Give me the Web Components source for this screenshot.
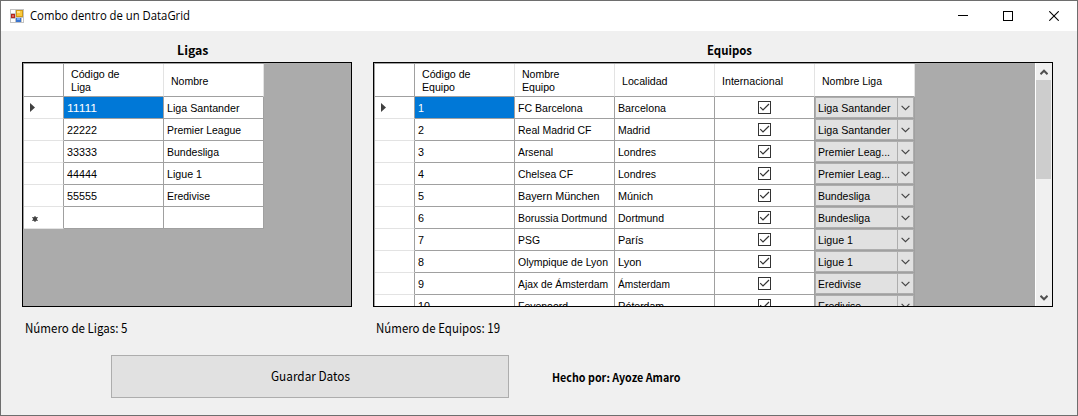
<!DOCTYPE html>
<html lang="es">
<head>
<meta charset="utf-8">
<title>Combo dentro de un DataGrid</title>
<style>
html,body{margin:0;height:100%;overflow:hidden}
body{font-family:"Noto Sans CJK SC",sans-serif;color:#000}
</style>
</head>
<body>
<app-window></app-window>
<script>
const define = (name, html, setup) => customElements.define(name, class extends HTMLElement {
  connectedCallback() {
    if (this.shadowRoot) return;
    const t = document.createElement('template');
    t.innerHTML = typeof html === 'function' ? html(this) : html;
    this.attachShadow({mode: 'open'}).append(t.content.cloneNode(true));
    if (setup) setup(this);
  }
});

/* Single-line text condensed or widened to "w" pixels. */
define('fit-text', `<style>:host{display:block;white-space:pre}span{display:inline-block;transform-origin:0 50%}</style><span><slot></slot></span>`, el => {
  const w = +el.getAttribute('w'), s = el.shadowRoot.querySelector('span');
  const natural = s.getBoundingClientRect().width;
  if (w && natural) {
    s.style.transform = `scaleX(${(w / natural).toFixed(4)})`;
    el.style.width = w + 'px';
  }
});

const WIDTHS = {'Código de':48.5,'Liga':20,'Nombre':37.5,'Equipo':33,'Localidad':45.5,'Internacional':61,'Nombre Liga':60,
 'Liga Santander':72.5,'Premier League':74,'Premier Leag...':72,'Bundesliga':52,'Ligue 1':35,'Eredivise':43,
 'FC Barcelona':64.5,'Real Madrid CF':73.5,'Arsenal':35,'Chelsea CF':55,'Bayern München':81.5,'Borussia Dortmund':89,'PSG':22,
 'Olympique de Lyon':90,'Ajax de Ámsterdam':90,'Feyenoord':50,'Barcelona':48,'Madrid':32,'Londres':38,'Múnich':35,
 'Dortmund':46,'París':25.5,'Lyon':23.5,'Ámsterdam':52,'Róterdam':46};
const fit = s => `<fit-text w="${WIDTHS[s] || s.length * 6}">${s}</fit-text>`;

define('title-bar', el => `<style>
:host{display:flex;align-items:center;height:30px;background:#fff;font:12px "Open Sans",sans-serif;flex:none}
.icon{margin-left:9px;margin-right:6px}
fit-text{line-height:30px;margin-right:auto}
.b{width:46px;display:flex;justify-content:center}
.min{width:44px}
svg{display:block}
</style>
<svg class="icon" width="14" height="14" shape-rendering="crispEdges"><rect width="14" height="14" fill="#c3c3c3"/><path d="M1 1h4v3H1zM1 10h4v3H1zM13 9V13H12V9z" fill="#fff"/><rect x="1" y="5" width="4" height="4" fill="#b3261e"/><rect x="2" y="6" width="2" height="2" fill="#e0635a"/><rect x="6" y="1" width="7" height="7" fill="#d09a16"/><rect x="7" y="2" width="5" height="5" fill="#fac93c"/><rect x="7" y="2" width="3" height="2" fill="#ffe38b"/><rect x="6" y="9" width="5" height="4" fill="#3a75d0"/><rect x="7" y="9" width="3" height="2" fill="#79aaf5"/></svg>
<fit-text w="160">${el.getAttribute('text')}</fit-text>
<span class="b min"><svg width="10" height="10" shape-rendering="crispEdges"><path d="M0 4h10v1H0z"/></svg></span>
<span class="b"><svg width="10" height="10" shape-rendering="crispEdges"><path d="M.5.5h9v9h-9z" fill="none" stroke="#000"/></svg></span>
<span class="b"><svg width="10" height="10"><path d="M.3.3l9.4 9.4M9.7.3L.3 9.7" stroke="#000" stroke-width="1.1"/></svg></span>`);

define('check-box', `<style>:host{display:block;width:13px;height:13px}svg{display:block}</style>
<svg width="13" height="13"><rect x=".5" y=".5" width="12" height="12" fill="#fff" stroke="#333"/><path d="M2.2 6.2L5 9L11 3" fill="none" stroke="#333" stroke-width="1.2"/></svg>`);

define('combo-cell', `<style>
:host{display:flex;box-sizing:border-box;width:99px;height:21px;border:1px solid #adadad;background:#e1e1e1}
.t{flex:1;padding-left:2px;line-height:20px;overflow:hidden}
.a{width:15px;border-left:1px solid #adadad;display:flex;align-items:center;justify-content:center}
</style><span class="t"><slot></slot></span><span class="a"><svg width="9" height="6"><path d="M.6 .8L4.5 4.7L8.4 .8" fill="none" stroke="#444" stroke-width="1.15"/></svg></span>`);

define('scroll-bar', `<style>
:host{display:flex;flex-direction:column;box-sizing:border-box;width:17px;background:#f0f0f0;border-left:1px solid #fff}
.btn{height:17px;display:flex;align-items:center;justify-content:center;flex:none;padding-right:1px}
.thumb{height:99px;width:15px;background:#cdcdcd}.track{flex:1}
</style>
<span class="btn"><svg width="8" height="6"><path d="M.5 5.2L4 1.7L7.5 5.2" fill="none" stroke="#505050" stroke-width="2"/></svg></span>
<div class="track"><div class="thumb"></div></div>
<span class="btn"><svg width="8" height="6"><path d="M.5 .8L4 4.3L7.5 .8" fill="none" stroke="#505050" stroke-width="2"/></svg></span>`);

const cell = v => v === true ? '<div class="c k"><check-box></check-box></div>'
  : v.startsWith('>') ? `<div class="c m"><combo-cell>${fit(v.slice(1))}</combo-cell></div>`
  : `<div class="c">${v ? fit(v) : ''}</div>`;
const marks = {
  arrow: '<svg width="5" height="9"><path d="M0 0L5 4.5L0 9z" fill="#404040"/></svg>',
  star: '<svg class="star" width="6" height="6"><circle cx="3" cy="3" r="2.3" fill="#505050"/><path d="M3 0v6M.3 1.4l5.4 3.2M5.7 1.4L.3 4.6" stroke="#404040" stroke-width="1"/></svg>'
};
const DATA = {
  ligas: {cols: ['Código de|Liga', 'Nombre'], rows: [['11111','Liga Santander'],['22222','Premier League'],['33333','Bundesliga'],['44444','Ligue 1'],['55555','Eredivise'],['','']]},
  equipos: {cols: ['Código de|Equipo','Nombre|Equipo','Localidad','Internacional','Nombre Liga'], scroll: true, rows: [
    ['1','FC Barcelona','Barcelona',true,'>Liga Santander'],['2','Real Madrid CF','Madrid',true,'>Liga Santander'],
    ['3','Arsenal','Londres',true,'>Premier Leag...'],['4','Chelsea CF','Londres',true,'>Premier Leag...'],
    ['5','Bayern München','Múnich',true,'>Bundesliga'],['6','Borussia Dortmund','Dortmund',true,'>Bundesliga'],
    ['7','PSG','París',true,'>Ligue 1'],['8','Olympique de Lyon','Lyon',true,'>Ligue 1'],
    ['9','Ajax de Ámsterdam','Ámsterdam',true,'>Eredivise'],['10','Feyenoord','Róterdam',true,'>Eredivise']]}
};
define('data-grid', el => {
  const d = DATA[el.getAttribute('source')];
  return `<style>
:host{display:flex;justify-content:space-between;box-sizing:border-box;height:245px;border:1px solid #000;background:#ababab;overflow:hidden;font:11.6px "Liberation Sans",Arial,sans-serif}
.table{border-left:1px solid #a0a0a0;border-top:1px solid #a0a0a0;height:max-content;flex:none}
.r{display:flex;height:22px}
.h,.c,.n{box-sizing:border-box;flex:none}
.n{width:40px;background:#fff;border-right:1px solid #a0a0a0;border-bottom:1px solid #e3e3e3;display:flex;align-items:center;padding-left:6px}
.c{width:100px;background:#fff;border-right:1px solid #a0a0a0;border-bottom:1px solid #a0a0a0;padding-left:3px;line-height:22px}
.head{height:33px}
.head .n{border-bottom-color:#a0a0a0}
.h{width:100px;background:#fff;border-right:1px solid #e3e3e3;border-bottom:1px solid #a0a0a0;padding:1px 0 0 6.5px;display:flex;flex-direction:column;justify-content:center;line-height:13px}
.two{padding-top:0;padding-bottom:1px}
.k{display:flex;padding:4px 0 0 43px}
.m{padding:0}
.sel{background:#0078d7;color:#fff}
.star{margin:2px 0 0 2px}
</style><div class="table"><div class="r head"><div class="n"></div>${d.cols.map(c => `<div class="h${c.includes('|') ? ' two' : ''}">${c.split('|').map(fit).join('')}</div>`).join('')}</div>
${d.rows.map((r, i) => `<div class="r"><div class="n">${i === 0 ? marks.arrow : r[0] === '' ? marks.star : ''}</div>${r.map(cell).join('')}</div>`).join('')}</div>
${d.scroll ? '<scroll-bar></scroll-bar>' : ''}`;
}, el => el.shadowRoot.querySelector('.c').classList.add('sel'));

define('push-button', `<style>:host{display:flex;align-items:center;justify-content:center;box-sizing:border-box;width:398px;height:43px;padding-bottom:2px;background:#e1e1e1;border:1px solid #adadad;font-size:13px;line-height:20px}</style><slot></slot>`);

define('grid-panel', `<style>
:host{display:flex;flex-direction:column}
.cap{height:31px;box-sizing:border-box;display:flex;justify-content:center;font-weight:700;font-size:12.5px;line-height:20px;padding:9px 0 0 var(--shift)}
.st{font-size:13px;line-height:20px;padding:11px 0 0 3px}
</style><div class="cap"><slot name="caption"></slot></div><slot></slot><div class="st"><slot name="status"></slot></div>`);

define('app-window', `<style>
:host{display:flex;flex-direction:column;box-sizing:border-box;width:1078px;height:416px;border:1px solid #6e6e6e;background:#f0f0f0}
.main{display:grid;grid-template-columns:330px 680px;column-gap:21px;padding-left:21px}
.foot{display:flex;align-items:center;padding:17px 0 0 110px;gap:43px}
.by{font-size:11.5px;font-weight:700;line-height:20px}
</style>
<title-bar text="Combo dentro de un DataGrid"></title-bar>
<div class="main">
<grid-panel style="--shift:11px"><fit-text w="31.5" slot="caption">Ligas</fit-text><data-grid source="ligas"></data-grid><fit-text w="102.5" slot="status">Número de Ligas: 5</fit-text></grid-panel>
<grid-panel style="--shift:33px"><fit-text w="45" slot="caption">Equipos</fit-text><data-grid source="equipos"></data-grid><fit-text w="124" slot="status">Número de Equipos: 19</fit-text></grid-panel>
</div>
<div class="foot"><push-button><fit-text w="79">Guardar Datos</fit-text></push-button><fit-text class="by" w="128.5">Hecho por: Ayoze Amaro</fit-text></div>`);
</script>
</body>
</html>
